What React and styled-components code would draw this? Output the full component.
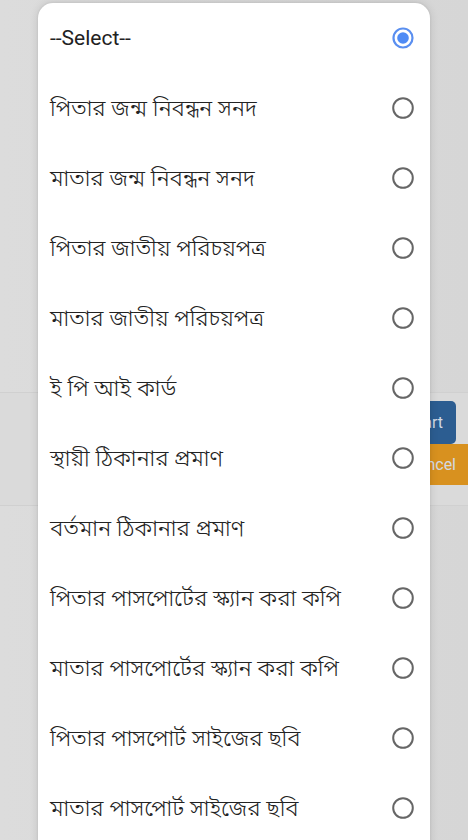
import React from "react";
import styled, { createGlobalStyle } from "styled-components";

const Global = createGlobalStyle`
  html, body { margin: 0; padding: 0; }
  body {
    background: #d9d9d9;
    width: 468px;
    height: 840px;
    overflow: hidden;
    font-family: Roboto, "Noto Sans Bengali", "Noto Serif Bengali", "Lohit Bengali", "Noto Sans", sans-serif;
  }
`;

const Screen = styled.div`
  position: relative;
  width: 468px;
  height: 840px;
  overflow: hidden;
  background: linear-gradient(90deg, #dcdcdc 0%, #d6d6d6 100%);
`;

const Underlay = styled.div`
  display: flex;
  flex-direction: column;
  align-items: flex-end;
  padding-top: 392px;
`;

const ButtonBand = styled.div`
  width: 100%;
  display: flex;
  flex-direction: column;
  align-items: flex-end;
  padding: 8px 0 20px;
  border-top: 1px solid #d0d0d0;
  border-bottom: 1px solid #d0d0d0;
  background: #dadada;
`;

const UnderButton = styled.div`
  height: ${(p) => p.$h}px;
  width: ${(p) => p.$w}px;
  margin-right: ${(p) => p.$mr}px;
  background: ${(p) => p.$bg};
  border-radius: ${(p) => p.$radius};
  color: #d3dae3;
  font-family: Roboto, sans-serif;
  font-size: 16px;
  display: flex;
  align-items: center;
  justify-content: flex-end;
  padding-right: ${(p) => p.$pr}px;
  box-sizing: border-box;
`;

const Dialog = styled.div`
  position: absolute;
  left: 38px;
  top: 3px;
  width: 392px;
  height: 860px;
  background: #ffffff;
  border-radius: 15px;
  box-shadow: 0 0 10px rgba(0, 0, 0, 0.12), 0 0 3px rgba(0, 0, 0, 0.08);
  display: flex;
  flex-direction: column;
`;

const Row = styled.div`
  height: 70px;
  flex: 0 0 70px;
  display: flex;
  align-items: center;
  justify-content: space-between;
  padding: 0 16px 0 12px;
`;

const Label = styled.span`
  font-size: ${(p) => (p.$latin ? "21px" : "22.5px")};
  font-weight: ${(p) => (p.$latin ? 400 : 300)};
  color: #222222;
  margin-top: ${(p) => (p.$latin ? "0" : "4px")};
  font-family: ${(p) =>
    p.$latin
      ? 'Roboto, "Noto Sans", sans-serif'
      : '"Noto Sans Bengali", "Noto Serif Bengali", "Lohit Bengali", "FreeSans", Roboto, sans-serif'};
`;

const Radio = ({ checked }) => (
  <svg width="22" height="22" viewBox="0 0 22 22">
    {checked ? (
      <>
        <circle cx="11" cy="11" r="9.5" fill="none" stroke="#5a8ff0" strokeWidth="2.2" />
        <circle cx="11" cy="11" r="5.8" fill="#4f8bf5" />
      </>
    ) : (
      <circle cx="11" cy="11" r="9.8" fill="none" stroke="#666666" strokeWidth="2" />
    )}
  </svg>
);

const items = [
  "--Select--",
  "পিতার জন্ম নিবন্ধন সনদ",
  "মাতার জন্ম নিবন্ধন সনদ",
  "পিতার জাতীয় পরিচয়পত্র",
  "মাতার জাতীয় পরিচয়পত্র",
  "ই পি আই কার্ড",
  "স্থায়ী ঠিকানার প্রমাণ",
  "বর্তমান ঠিকানার প্রমাণ",
  "পিতার পাসপোর্টের স্ক্যান করা কপি",
  "মাতার পাসপোর্টের স্ক্যান করা কপি",
  "পিতার পাসপোর্ট সাইজের ছবি",
  "মাতার পাসপোর্ট সাইজের ছবি",
];

export default function App() {
  return (
    <>
      <Global />
      <Screen>
        <Underlay>
          <ButtonBand>
            <UnderButton $h={43} $w={80} $mr={12} $bg="#2c5d91" $radius="5px" $pr={13}>
              Start
            </UnderButton>
            <UnderButton $h={41} $w={100} $mr={0} $bg="#d8911f" $radius="0" $pr={12}>
              Cancel
            </UnderButton>
          </ButtonBand>
        </Underlay>
        <Dialog>
          {items.map((t, i) => (
            <Row key={i}>
              <Label $latin={i === 0}>{t}</Label>
              <Radio checked={i === 0} />
            </Row>
          ))}
        </Dialog>
      </Screen>
    </>
  );
}
